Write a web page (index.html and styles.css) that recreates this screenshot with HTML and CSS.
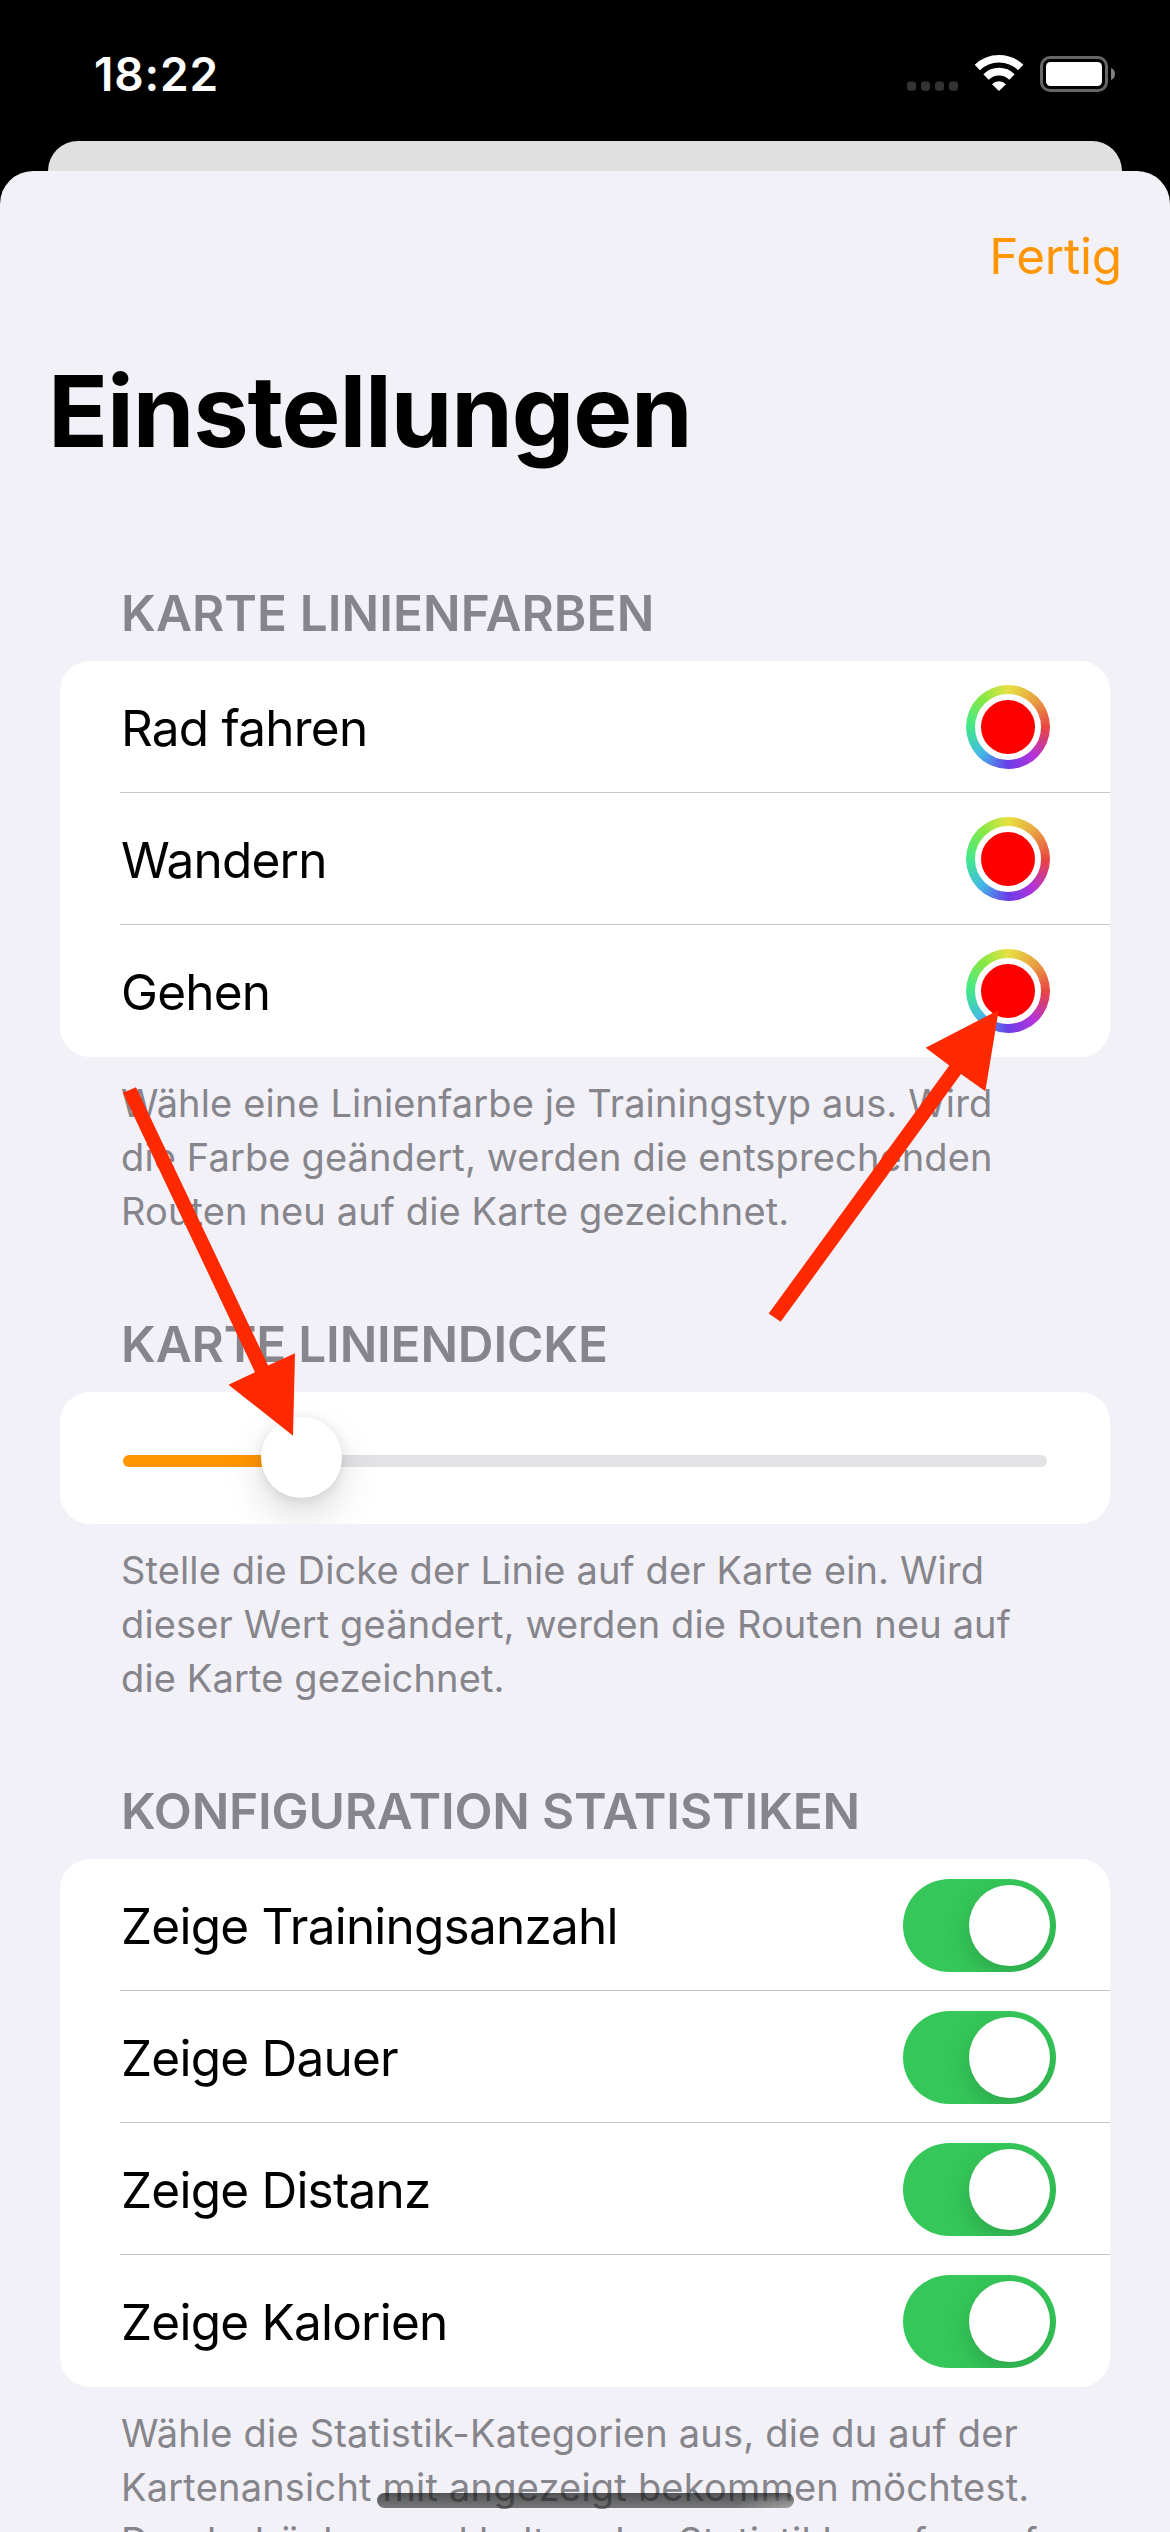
FILE: index.html
```html
<!DOCTYPE html>
<html lang="de">
<head>
<meta charset="utf-8">
<title>Einstellungen</title>
<link rel="stylesheet" href="styles.css">
</head>
<body>
<div class="screen">
  <header class="status">
    <span class="time">18:22</span>
    <svg class="status-icons" width="210" height="40" viewBox="0 0 210 40">
      <g fill="#333">
        <rect x="2" y="28.500" width="9" height="9.200" rx="3"/>
        <rect x="16" y="28.500" width="9" height="9.200" rx="3"/>
        <rect x="30" y="28.500" width="9" height="9.200" rx="3"/>
        <rect x="44" y="28.500" width="9" height="9.200" rx="3"/>
      </g>
      <g fill="none" stroke="#fff">
        <path stroke-width="7.500" d="M72.300 14.500A31.300 31.300 0 0 1 115.700 14.500"/>
        <path stroke-width="7.600" d="M81 24A18.500 18.500 0 0 1 107 24"/>
      </g>
      <path fill="#fff" d="M94 38l-7-6.800a10 10 0 0 1 14 0z"/>
      <rect x="136.500" y="4.500" width="65" height="33" rx="8.500" fill="none" stroke="#666" stroke-width="3"/>
      <rect x="141" y="9" width="56" height="24" rx="4.500" fill="#fff"/>
      <path fill="#808080" d="M206 15a6.500 6.500 0 0 1 0 12z"/>
    </svg>
  </header>
  <div class="backdrop-card"></div>
  <main class="sheet">
    <nav class="nav"><a class="done">Fertig</a></nav>
    <h1 class="title">Einstellungen</h1>

    <section class="section">
      <h2 class="section-title">KARTE LINIENFARBEN</h2>
      <div class="card">
        <div class="row"><span class="label">Rad fahren</span><span class="well"><i class="swatch"></i></span></div>
        <div class="row"><span class="label">Wandern</span><span class="well"><i class="swatch"></i></span></div>
        <div class="row"><span class="label">Gehen</span><span class="well"><i class="swatch"></i></span></div>
      </div>
      <p class="note">Wähle eine Linienfarbe je Trainingstyp aus. Wird<br>die Farbe geändert, werden die entsprechenden<br>Routen neu auf die Karte gezeichnet.</p>
    </section>

    <section class="section">
      <h2 class="section-title tight">KARTE LINIENDICKE</h2>
      <div class="card slider-card">
        <div class="slider"><span class="fill"></span><span class="thumb"></span><span class="rest"></span></div>
      </div>
      <p class="note">Stelle die Dicke der Linie auf der Karte ein. Wird<br>dieser Wert geändert, werden die Routen neu auf<br>die Karte gezeichnet.</p>
    </section>

    <section class="section">
      <h2 class="section-title tight">KONFIGURATION STATISTIKEN</h2>
      <div class="card">
        <div class="row"><span class="label">Zeige Trainingsanzahl</span><span class="toggle"><i class="knob"></i></span></div>
        <div class="row"><span class="label">Zeige Dauer</span><span class="toggle"><i class="knob"></i></span></div>
        <div class="row"><span class="label">Zeige Distanz</span><span class="toggle"><i class="knob"></i></span></div>
        <div class="row"><span class="label">Zeige Kalorien</span><span class="toggle"><i class="knob"></i></span></div>
      </div>
      <p class="note wide">Wähle die Statistik-Kategorien aus, die du auf der<br>Kartenansicht mit angezeigt bekommen möchtest.<br>Durch drücken und halten des Statistikknopfes auf</p>
    </section>
  </main>

  <svg class="arrows" width="1170" height="2532" viewBox="0 0 1170 2532" fill="#ff2900">
    <path d="M293 1435.700L228.500 1384.700L255 1372.300L122.900 1092.700L136 1087.300L268.100 1365.500L295 1353.300Z"/>
    <path d="M998.700 1010L925.700 1047.700L949.300 1065.600L768.700 1313.500L780.700 1321.800L961 1073.900L985.300 1091.300Z"/>
  </svg>
  <div class="home-indicator"></div>
</div>
</body>
</html>
```
FILE: styles.css
```css
* { box-sizing: border-box; margin: 0; padding: 0; }

body {
  background: #000;
  font-family: Inter, "Liberation Sans", sans-serif;
  overflow: hidden;
}

.screen {
  position: relative;
  display: flex;
  flex-direction: column;
  width: 1170px;
  height: 2532px;
  background: #000;
  overflow: hidden;
}

/* Status bar */
.status {
  display: flex;
  flex: none;
  justify-content: space-between;
  align-items: flex-start;
  height: 141px;
  padding: 46px 55px 0 94px;
}
.time {
  color: #fff;
  font-size: 46px;
  font-weight: 600;
  line-height: 56px;
  letter-spacing: 0.8px;
}
.status-icons { margin-top: 7px; }

/* Sheet and the card behind it */
.backdrop-card {
  flex: none;
  height: 90px;
  margin: 0 48px -60px;
  border-radius: 30px 30px 0 0;
  background: #e0e0e0;
}
.sheet {
  position: relative;
  flex: 1;
  min-height: 0;
  padding-top: 55px;
  border-radius: 33px 33px 0 0;
  background: #f2f1f7;
  overflow: hidden;
}
.nav {
  display: flex;
  justify-content: flex-end;
  padding: 0 48px;
}
.done {
  color: #ff9500;
  font-size: 49.5px;
  line-height: 60px;
  letter-spacing: -0.2px;
}
.title {
  margin: 65px 48px 112px;
  font-size: 99px;
  font-weight: 700;
  line-height: 120px;
  letter-spacing: -1.15px;
}

/* Grouped sections */
.section { margin: 0 60px 76px; }
.section-title {
  margin: 0 61px 18px;
  color: #86858b;
  font-size: 49.5px;
  font-weight: 600;
  line-height: 60px;
  letter-spacing: 0.08px;
  white-space: nowrap;
}
.section-title.tight { letter-spacing: -0.16px; }
.card {
  border-radius: 30px;
  background: #fff;
  overflow: hidden;
}
.row {
  display: flex;
  align-items: center;
  justify-content: space-between;
  height: 132px;
  margin-left: 60px;
  padding-right: 54px;
  border-bottom: 1px solid #c6c6c8;
}
.row:last-child { border-bottom-color: transparent; }
.label {
  padding: 3px 0 0 1px;
  font-size: 49.5px;
  line-height: 60px;
  letter-spacing: -0.78px;
}
.note {
  margin: 19px 0 0 61px;
  color: #86858b;
  font-size: 38px;
  line-height: 54px;
  letter-spacing: 0.13px;
  white-space: nowrap;
}
.note.wide { letter-spacing: 0.2px; }

/* Colour well */
.well {
  display: flex;
  align-items: center;
  justify-content: center;
  width: 84px;
  height: 84px;
  margin-right: 6px;
  border-radius: 50%;
  background: conic-gradient(#e7e143, #e8a143 45deg, #e84343 92deg, #b233dc 140deg, #6a3de8 180deg, #43b8e8 225deg, #43e88a 270deg, #8ae843 320deg, #e7e143);
}
.swatch {
  width: 66px;
  height: 66px;
  border: 6px solid #fff;
  border-radius: 50%;
  background: #f00;
}

/* Slider */
.slider-card { padding: 25px 63px 0; height: 132px; }
.slider { display: flex; align-items: center; }
.fill, .rest {
  height: 12px;
  margin-top: 7px;
  border-radius: 6px;
}
.fill { width: 178px; margin-right: -40px; background: #ff9500; }
.rest { flex: 1; margin-left: -40px; background: #e3e3e5; }
.thumb {
  z-index: 1;
  width: 81px;
  height: 81px;
  border-radius: 50%;
  background: #fff;
  box-shadow: 0 18px 39px rgba(0, 0, 0, 0.14), 0 2px 12px rgba(0, 0, 0, 0.1);
}

/* Toggle */
.toggle {
  display: flex;
  align-items: center;
  justify-content: flex-end;
  width: 153px;
  height: 93px;
  margin-top: 2px;
  padding: 6px;
  border-radius: 47px;
  background: #35c759;
  overflow: hidden;
}
.knob {
  width: 81px;
  height: 81px;
  border-radius: 50%;
  background: #fff;
  box-shadow: 0 9px 24px rgba(0, 0, 0, 0.17);
}

/* Overlays */
.arrows { position: absolute; inset: 0; z-index: 2; }
.home-indicator {
  position: absolute;
  z-index: 3;
  left: 377px;
  top: 2493px;
  width: 417px;
  height: 15px;
  border-radius: 8px;
  background:
    radial-gradient(ellipse 60px 15px at 100% 100%, rgba(190, 190, 190, 0.6), rgba(190, 190, 190, 0)),
    linear-gradient(rgba(14, 16, 16, 0.7), rgba(50, 50, 50, 0.64));
}
```
